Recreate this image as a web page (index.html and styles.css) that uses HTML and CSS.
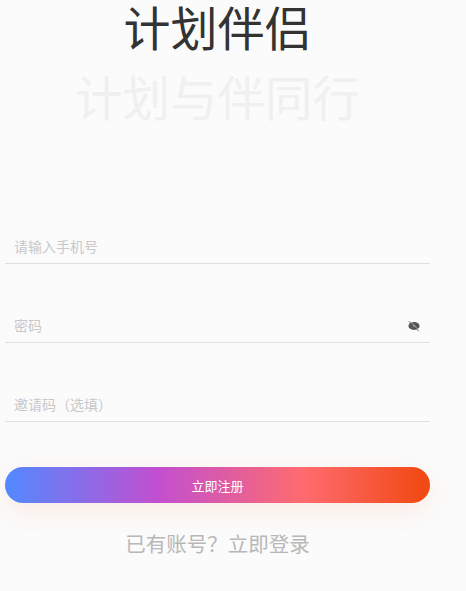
FILE: index.html
```html
<!DOCTYPE html>
<html lang="zh-CN">
<head>
<meta charset="utf-8">
<title>计划伴侣</title>
<link rel="stylesheet" href="styles.css">
</head>
<body>
<main class="page">
  <h1 class="title">计划伴侣</h1>
  <p class="subtitle">计划与伴同行</p>
  <form class="form">
    <div class="field"><span class="placeholder">请输入手机号</span></div>
    <div class="field">
      <span class="placeholder">密码</span>
      <svg class="eye" width="12" height="12" viewBox="0 0 12 12" aria-hidden="true">
        <ellipse cx="6" cy="6" rx="5.600" ry="3.900" fill="#555"/>
        <circle cx="6" cy="6" r="1.300" fill="#9a9a9a"/>
        <path d="M1.200 0.800L11.200 10.800" stroke="#f4f4f4" stroke-width="0.800"/>
        <path d="M0.800 1.200L10.800 11.200" stroke="#444" stroke-width="0.800"/>
      </svg>
    </div>
    <div class="field"><span class="placeholder">邀请码（选填）</span></div>
    <button class="submit" type="button">立即注册</button>
  </form>
  <p class="login">已有账号？立即登录</p>
</main>
</body>
</html>
```
FILE: styles.css
```css
* { box-sizing: border-box; }
html, body { margin: 0; height: 100%; }
body {
  background: #fbfbfb;
  font-family: "Noto Sans CJK SC", "Noto Sans", sans-serif;
  overflow: hidden;
}
.page {
  width: 425px;
  margin-left: 5px;
  display: flex;
  flex-direction: column;
  align-items: stretch;
  text-align: center;
}
.title {
  margin: 0;
  height: 52px;
  font-size: 47px;
  line-height: 52px;
  font-weight: 400;
  color: #333;
}
.subtitle {
  margin: 15px 0 0;
  height: 58px;
  font-size: 47.500px;
  line-height: 58px;
  color: #f0f0f0;
}
.form {
  margin-top: 78px;
  display: flex;
  flex-direction: column;
}
.field {
  height: 61px;
  margin-bottom: 18px;
  padding: 0 10px 7px 9px;
  border-bottom: 1px solid #e0e0e0;
  display: flex;
  align-items: flex-end;
  justify-content: space-between;
}
.placeholder {
  font-size: 14px;
  line-height: 20px;
  color: #c8c8cb;
}
.eye { margin-bottom: 3px; }
.submit {
  margin-top: 27px;
  height: 36px;
  border: 0;
  border-radius: 18px;
  padding: 0;
  font-family: inherit;
  font-size: 13px;
  color: #fff;
  background: linear-gradient(90deg, #5289ff 0%, #c24fd0 36%, #ff6b70 70%, #f04810 100%);
  box-shadow: 0 8px 24px rgba(240, 120, 60, 0.12);
}
.login {
  margin: 23px 0 0;
  font-size: 20.500px;
  line-height: 34px;
  color: #b8b8b8;
}
```
